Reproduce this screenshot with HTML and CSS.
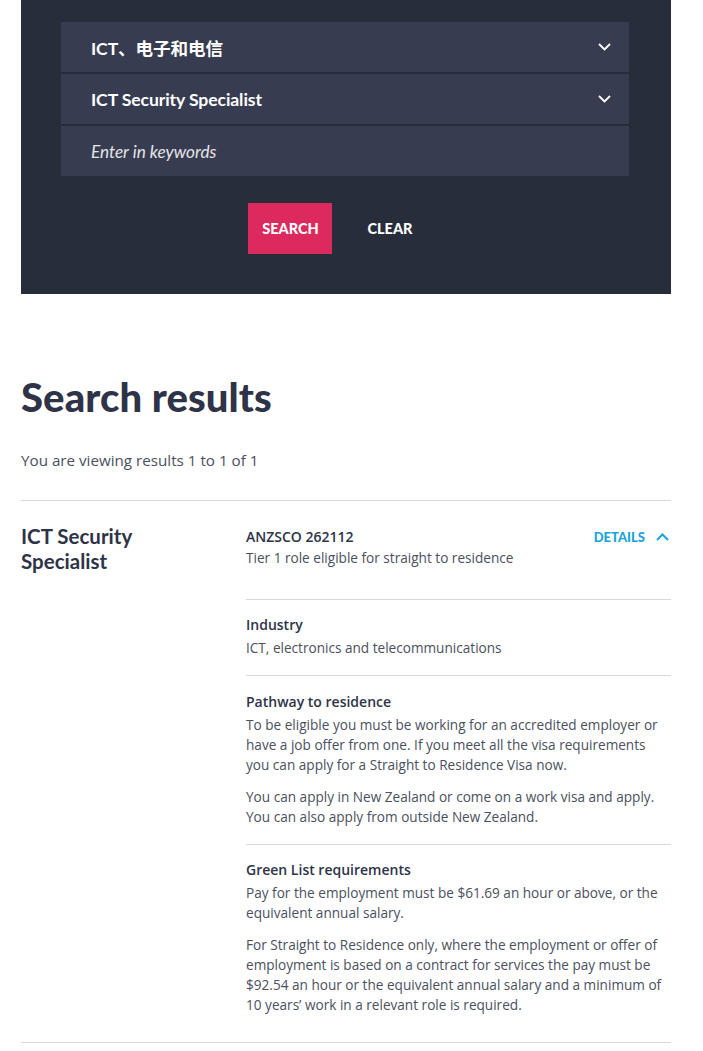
FILE: index.html
```html
<!DOCTYPE html>
<html lang="en">
<head>
<meta charset="utf-8">
<link rel="stylesheet" href="styles.css">
</head>
<body>
<div class="page">
  <section class="panel">
    <div class="fields">
      <div class="field select">
        <span class="field-text">ICT、电子和电信</span>
        <svg class="chev" width="13" height="8" viewBox="0 0 13 8"><path d="M1 1 L6.5 6.5 L12 1" fill="none" stroke="#fff" stroke-width="1.8"/></svg>
      </div>
      <div class="field select">
        <span class="field-text">ICT Security Specialist</span>
        <svg class="chev" width="13" height="8" viewBox="0 0 13 8"><path d="M1 1 L6.5 6.5 L12 1" fill="none" stroke="#fff" stroke-width="1.8"/></svg>
      </div>
      <div class="field input">
        <span class="placeholder">Enter in keywords</span>
      </div>
    </div>
    <div class="actions">
      <button class="btn btn-search">SEARCH</button>
      <button class="btn btn-clear">CLEAR</button>
    </div>
  </section>

  <h1 class="title">Search results</h1>
  <p class="count">You are viewing results 1 to 1 of 1</p>

  <div class="result">
    <div class="result-side">
      <h2 class="result-name">ICT Security Specialist</h2>
    </div>
    <div class="result-body">
      <div class="summary">
        <div class="summary-text">
          <div class="code">ANZSCO 262112</div>
          <div class="tier">Tier 1 role eligible for straight to residence</div>
        </div>
        <div class="details">DETAILS
          <svg width="13" height="8" viewBox="0 0 13 8"><path d="M1 7 L6.5 1.5 L12 7" fill="none" stroke="#1ba3d9" stroke-width="2"/></svg>
        </div>
      </div>
      <div class="block">
        <h3>Industry</h3>
        <p>ICT, electronics and telecommunications</p>
      </div>
      <div class="block">
        <h3>Pathway to residence</h3>
        <p>To be eligible you must be working for an accredited employer or have a job offer from one. If you meet all the visa requirements you can apply for a Straight to Residence Visa now.</p>
        <p>You can apply in New Zealand or come on a work visa and apply. You can also apply from outside New Zealand.</p>
      </div>
      <div class="block">
        <h3>Green List requirements</h3>
        <p>Pay for the employment must be $61.69 an hour or above, or the equivalent annual salary.</p>
        <p>For Straight to Residence only, where the employment or offer of employment is based on a contract for services the pay must be $92.54 an hour or the equivalent annual salary and a minimum of 10 years’ work in a relevant role is required.</p>
      </div>
    </div>
  </div>
</div>
</body>
</html>
```

FILE: styles.css
```css
* { box-sizing: border-box; }
html, body { margin: 0; padding: 0; background: #fff; }
body { font-family: "Open Sans", "Noto Sans", sans-serif; color: #4b5060; }
.page { width: 650px; margin-left: 21px; }

.panel { background: #272d3a; height: 294px; padding: 22px 42px 0 40px; }
.fields { display: flex; flex-direction: column; gap: 2px; }
.field { height: 50px; background: #383c50; display: flex; align-items: center; justify-content: space-between; padding: 0 18px 0 30px; }
.field-text { font-family: "Lato", "Noto Sans CJK SC", sans-serif; font-weight: 700; font-size: 17.6px; color: #fff; letter-spacing: -0.1px; }
.placeholder { font-family: "Lato", sans-serif; font-style: italic; font-size: 17.2px; color: #e4e5ea; }
.chev { display: block; }

.actions { display: flex; justify-content: center; margin-top: 27px; padding-left: 6px; }
.btn { border: 0; height: 51px; font-family: "Lato", sans-serif; font-weight: 900; font-size: 14.5px; color: #fff; background: transparent; padding: 0; cursor: pointer; }
.btn-search { background: #dc2a5e; width: 84px; }
.btn-clear { padding: 0 35px; }

.title { font-family: "Lato", sans-serif; font-weight: 900; font-size: 40px; letter-spacing: 0.1px; color: #2e3347; margin: 76px 0 0; line-height: 54px; }
.count { font-size: 15.2px; margin: 24px 0 0; line-height: 24px; color: #4b5060; }

.result { border-top: 1px solid #d9d9d9; border-bottom: 1px solid #d9d9d9; margin-top: 28px; display: flex; }
.result-side { width: 225px; flex: none; }
.result-name { width: 150px; margin: 23px 0 0; font-family: "Lato", sans-serif; font-weight: 700; font-size: 20.5px; line-height: 25px; color: #2e3347; }
.result-body { flex: 1; }
.summary { display: flex; justify-content: space-between; padding: 25px 0 31px; border-bottom: 1px solid #d9d9d9; }
.code { font-size: 14px; font-weight: 600; color: #2e3347; line-height: 22px; }
.tier { font-size: 13.6px; line-height: 20px; }
.details { font-family: "Lato", sans-serif; font-weight: 900; font-size: 13px; color: #1ba3d9; display: flex; align-items: center; gap: 11px; height: 22px; margin-right: 2px; }
.block { padding: 14px 0 17px; border-bottom: 1px solid #d9d9d9; }
.block + .block { padding-top: 15px; }
.block:last-child { border-bottom: 0; padding-top: 14px; padding-bottom: 27px; }
.block h3 { margin: 0 0 2px; font-size: 14px; font-weight: 600; color: #2e3347; line-height: 22px; }
.block p { margin: 0 0 12px; font-size: 13.6px; line-height: 20px; }
.block p:last-child { margin-bottom: 0; }
```
